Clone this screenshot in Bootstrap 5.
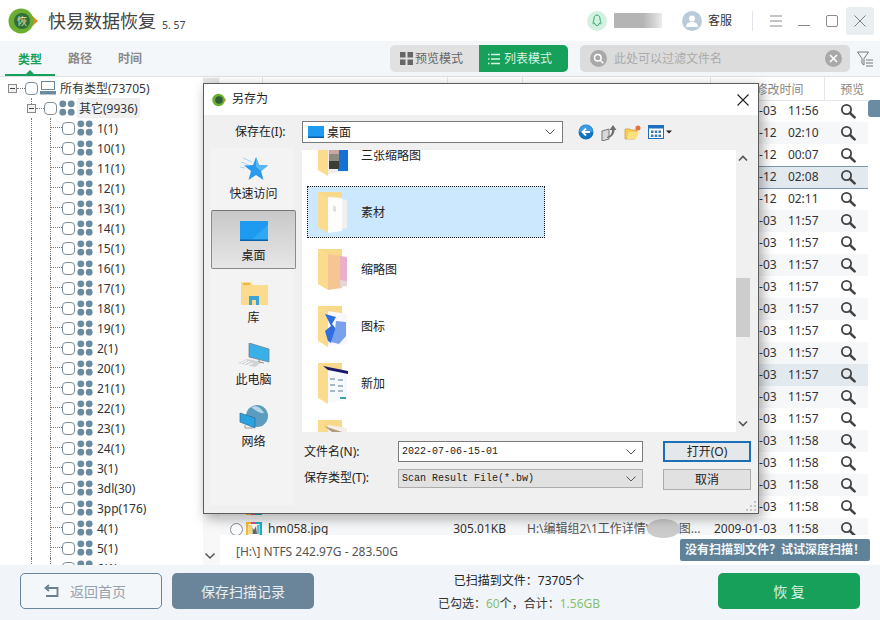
<!DOCTYPE html>
<html lang="zh-CN">
<head>
  <meta charset="UTF-8">
  <meta name="viewport" content="width=device-width, initial-scale=1">
  <title>快易数据恢复</title>
  <link href="https://cdn.jsdelivr.net/npm/bootstrap@5.3.3/dist/css/bootstrap.min.css" rel="stylesheet">
  <style>
    html, body { margin: 0; height: 620px; overflow: hidden; background: #fff; }
    body { font-family: "Noto Sans", "Noto Sans CJK SC", sans-serif; font-size: 12px; color: #333; line-height: 16px; }
    .app { width: 880px; height: 620px; }

    /* top bar */
    .top-bar { height: 41px; flex: none; padding-left: 8px; }
    .app-title { font-size: 18px; margin-left: 10px; color: #444; }
    .app-ver { font-size: 10.5px; margin: 9px 0 0 6px; color: #444; }
    .qq-dot { width: 20px; height: 20px; border-radius: 50%; background: #d3f1e1; }
    .name-blur { width: 48px; height: 15px; margin: 0 20px 0 7px; background: linear-gradient(to right, #b4b4b4 60%, #d4d4d4 85%, #eee); }
    .me-dot { width: 20px; height: 20px; border-radius: 50%; background: #b9cbdb; margin-right: 6px; }
    .bar-sep { width: 1px; height: 20px; background: #e2e6ea; margin: 0 17px 0 20px; }
    .win-gap { margin-right: 16px; }
    .win-close { width: 28px; height: 28px; background: #e9eef0; border-radius: 3px; margin: 0 6px 0 8px; }

    /* toolbar */
    .tool-bar { height: 36px; flex: none; background: #f4f7fa; border-bottom: 1px solid #dfe3e6; padding-left: 5px; padding-right: 7px; }
    .tab-item { width: 50px; line-height: 36px; text-align: center; color: #8a8a8a; font-weight: 700; position: relative; }
    .tab-item.on { color: #17a05a; border-bottom: 2px solid #17a05a; line-height: 38px; height: 35px; }
    .tab-item.on::after { content: ""; position: absolute; left: 21px; bottom: 0; border: 4px solid transparent; border-bottom-color: #17a05a; border-top: 0; }
    .mode-group { height: 27px; margin-top: 4px; border-radius: 5px; overflow: hidden; background: #e1e1e1; width: 178px; }
    .mode-btn { width: 89px; display: flex; align-items: center; padding-left: 10px; gap: 2px; color: #666; font-size: 12px; }
    .mode-btn span { padding-top: 1px; }
    .mode-btn.on { background: #17a05a; color: #d8f3e4; padding-left: 9px; gap: 4px; }
    .filter-box { width: 270px; height: 27px; margin: 4px 7px 0 12px; background: #dcdcdc; border-radius: 5px; padding: 0 8px 0 10px; color: #ababab; }
    .round-ic { width: 17px; height: 17px; border-radius: 50%; background: #a9a9a9; flex: none; }
    .filter-ph { margin-left: 7px; }
    .funnel { margin-top: 10px; }

    /* tree */
    .main-row { flex: 1; min-height: 0; }
    .tree-pane { width: 203px; flex: none; padding-top: 1px; overflow: hidden; }
    .tree-line { height: 20px; white-space: nowrap; }
    .tree-line > span:last-child { padding-top: 2px; }
    .exp-box { width: 9px; height: 9px; border: 1px solid #8a8a8a; background: #f3f3f3; position: relative; flex: none; }
    .exp-box::after { content: ""; position: absolute; left: 1px; right: 1px; top: 3px; border-top: 1px solid #444; }
    .exp-1 { margin-left: 8px; }
    .exp-2 { margin-left: 27px; }
    .exp-2::before { content: ""; position: absolute; left: 3px; top: -7px; height: 6px; border-left: 1px dotted #777; }
    .dot-h { width: 8px; border-top: 1px dotted #777; flex: none; }
    .tick { width: 13px; height: 13px; border: 1px solid #7e8e9a; border-radius: 4px; background: #fff; flex: none; }
    .guide-a { width: 19px; margin-left: 31px; align-self: stretch; border-left: 1px dotted #777; flex: none; }
    .guide-b { width: 12px; align-self: stretch; border-left: 1px dotted #777; flex: none; }
    .guide-b::after { content: ""; display: block; height: 10px; border-bottom: 1px dotted #777; }
    .tree-ic { margin: 0 4px 0 2px; flex: none; }
    .tree-line > span.tree-hl { background: #f0f0f0; padding: 3px 2px 1px; margin-left: -2px; }
    .tree-bar { width: 17px; flex: none; background: #f8f8f8; }
    .tree-thumb { height: 60px; background: #e6e6e6; margin: 1px 1px 0 0; }

    /* file table */
    .file-pane { min-width: 0; flex: 1; }
    .file-wrap { flex: 1; min-height: 0; overflow: hidden; }
    .file-tbl { --bs-table-bg: transparent; table-layout: fixed; width: 648px; margin: 0; font-size: 12px; color: #333; }
    .file-tbl th { height: 23px; padding: 0 0 2px; font-weight: 400; color: #888; border-bottom: 1px solid #e6e6e6; border-right: 1px solid #e6e6e6; }
    .file-tbl th:last-child { border-right: 0; text-align: center; padding-left: 12px; }
    .file-tbl td { height: 22px; padding: 0; white-space: nowrap; overflow: hidden; vertical-align: middle; }
    .file-tbl tr.odd { background: #f6f7f8; }
    .file-tbl tr.hov { background: #e3eaef; }
    .file-tbl tr.sel { background: #e3eaef; }
    .file-tbl tr.sel td { border-top: 1px solid #7f97a9; border-bottom: 1px solid #7f97a9; }
    .file-tbl tr.sel td:last-child { border-right: 1px solid #7f97a9; }
    .file-tbl th.date-h { padding-left: 45px; }
    .size-td { text-align: right; padding-right: 16px !important; }
    .path-td { padding-left: 5px !important; color: #555; }
    .date-td { padding-left: 4px !important; white-space: pre !important; word-spacing: 2.5px; }
    .view-td { padding-left: 4px !important; }
    .view-td svg { display: block; margin: 0 auto; }
    .circle-tick { width: 13px; height: 13px; border: 1px solid #7e8e9a; border-radius: 50%; background: #fff; flex: none; margin: 0 3px 0 10px; }
    .circle-h { display: block; }
    .file-name { margin-left: 6px; }
    .side-bar { width: 12px; flex: none; }
    .side-thumb { height: 17px; margin-top: 23px; background: #6a8ca3; border-radius: 3px 0 0 3px; }
    .status-line { height: 30px; flex: none; padding: 3px 0 0 16px; color: #555; }
    .hint-tag { position: absolute; right: 10px; top: 539px; width: 190px; height: 22px; line-height: 22px; text-align: center; background: #5f8298; color: #f2f6f9; font-weight: 700; border-radius: 2px; white-space: nowrap; }
    .smudge { position: absolute; left: 647px; top: 519px; width: 33px; height: 19px; background: #cbcbcb; border-radius: 50%; }

    /* bottom bar */
    .foot-bar { height: 55px; flex: none; background: #f1f5fa; padding: 8px 20px 0; }
    .foot-btn { width: 142px; height: 36px; font-size: 14px; border-radius: 5px; padding: 0; }
    .back-btn { border: 1px solid #6a8599; color: #94a2ad; background: #f4f7fa; display: flex; align-items: center; padding-left: 23px; gap: 11px; }
    .save-btn { background: #6a8599; border: 0; color: #e8eef2; margin-left: 10px; }
    .ok-btn { background: #17a05a; border: 0; color: #d8f3e4; margin-left: auto; }
    .foot-info { width: 404px; text-align: center; line-height: 23px; padding-left: 6px; margin-top: -4px; }
    .foot-info b { font-weight: 400; color: #86bf6e; }
    .foot-info div:first-child { color: #222; }

    /* save dialog */
    .save-dlg { position: absolute; left: 203px; top: 83px; width: 556px; height: 431px; background: #f0f0f0; border: 1px solid #5c5c5c; box-shadow: 3px 4px 12px rgba(0,0,0,.35); color: #222; }
    .dlg-title { height: 31px; background: #fff; padding: 0 9px 0 8px; flex: none; }
    .dlg-title span { margin-left: 6px; margin-bottom: 2px; }
    .dlg-x { margin-left: auto; }
    .dlg-tools { height: 34px; flex: none; padding-left: 31px; }
    .look-label { width: 67px; }
    .look-combo { width: 261px; height: 22px; background: #fff; border: 1px solid #7a7a7a; padding: 0 7px 0 5px; }
    .look-combo span { margin: 2px 0 0 3px; }
    .tool-ics { margin-left: 15px; gap: 7px; }
    .dlg-body { flex: 1; min-height: 0; }
    .place-col { width: 98px; flex: none; padding: 0 8px 8px 6px; margin-top: -1px; }
    .place-bg { background: #f3f3f3; height: 100%; }
    .place-item { height: 62px; padding-top: 9px; width: 85px; margin-left: 1px; text-align: center; }
    .place-item svg { display: block; margin: 0 auto 5px; }
    .place-item.on { height: 59px; margin-bottom: 3px; background: linear-gradient(#c9c9c9, #e6e6e6); border: 1px solid #8a8a8a; border-top-color: #777; padding-top: 8px; border-radius: 2px; }
    .list-row { height: 282px; flex: none; margin-top: 1px; }
    .list-area { width: 434px; background: #fff; overflow: hidden; }
    .list-scroll { width: 14px; flex: none; }
    .scroll-arrow { height: 17px; }
    .scroll-thumb { height: 59px; margin-top: 111px; background: #cdcdcd; }
    .folder-item { height: 52px; width: 238px; margin: 0 0 5px 5px; padding: 2px 0 0 10px; gap: 13px; border: 1px dotted transparent; }
    .folder-item.first { margin-top: -21px; }
    .folder-item.on { background: #cce8ff; border-color: #1a1a1a; }
    .form-row { margin: 0 0 0 2px; }
    .form-row label { width: 94px; }
    .form-one { padding-top: 9px; height: 37px; }
    .form-one label { padding-top: 3px; }
    .form-two { height: 20px; }
    .form-two label { padding-top: 1px; }
    .name-input { width: 245px; height: 21px; background: #fff; border: 1px solid #7a7a7a; padding: 0 6px 0 3px; font-family: "Liberation Mono", monospace; font-size: 10px; }
    .type-input { width: 245px; height: 19px; background: #e1e1e1; border: 1px solid #adadad; padding: 0 6px 0 3px; font-family: "Liberation Mono", monospace; font-size: 10px; }
    .dlg-btn { width: 88px; height: 21px; margin-left: 20px; padding: 0; background: #e1e1e1; border: 1px solid #adadad; border-radius: 0; font-size: 12px; color: #222; line-height: 16px; }
    .dlg-btn.def { border: 2px solid #1a6fb5; background: #e4e8ea; }
    .grip { position: absolute; right: 2px; bottom: 2px; }
  </style>
</head>

<body>
<svg width="0" height="0" class="d-none">
  <symbol id="dots-ic" viewBox="0 0 16 16"><circle cx="3.8" cy="3.8" r="3.4" fill="#6a8aa0"/><circle cx="12.2" cy="3.8" r="3.4" fill="#6a8aa0"/><circle cx="3.8" cy="12.2" r="3.4" fill="#6a8aa0"/><circle cx="12.2" cy="12.2" r="3.4" fill="#6a8aa0"/></symbol>
  <symbol id="lens-ic" viewBox="0 0 16 16"><circle cx="6.5" cy="6.5" r="4.6" fill="none" stroke="#444" stroke-width="1.8"/><path d="M10 10l4.6 4.4" stroke="#444" stroke-width="2.6" stroke-linecap="round"/></symbol>
  <symbol id="folder-base" viewBox="0 0 30 44"><path d="M0 1h24v8H0z" fill="#f8d98b"/><path d="M0 1l10 6v35L0 36z" fill="#fbdc8e"/></symbol>
</svg>

<div class="app d-flex flex-column position-relative">

  <div class="top-bar d-flex align-items-center">
    <svg width="30" height="26" viewBox="0 0 30 26">
      <path d="M19 3l11 10-11 10z" fill="#e08a2e"/>
      <circle cx="13" cy="13" r="12.5" fill="#6cae2f"/>
      <circle cx="14" cy="13" r="8" fill="#2f6f3a"/>
      <text x="14" y="17" font-size="10" fill="#e8e2b0" text-anchor="middle" font-family="Noto Sans CJK SC">恢</text>
    </svg>
    <div class="app-title">快易数据恢复</div>
    <div class="app-ver">5. 57</div>
    <div class="ms-auto d-flex align-items-center">
      <div class="qq-dot d-flex align-items-center justify-content-center">
        <svg width="10" height="13" viewBox="0 0 10 13"><path d="M5 1C2.8 1 2 3 2 5c0 1.500-1.200 3-1 4.500.5.500 1 0 1.500-.5.500 1.500 1 2.500 2.500 2.500S7 10.500 7.500 9c.5.500 1 1 1.500.5.200-1.500-1-3-1-4.500C8 3 7.200 1 5 1z" fill="none" stroke="#2fa56b" stroke-width="1"/></svg>
      </div>
      <div class="name-blur"></div>
      <div class="me-dot d-flex align-items-center justify-content-center">
        <svg width="14" height="12" viewBox="0 0 14 12"><circle cx="7" cy="3.500" r="3" fill="#fff"/><path d="M1 12c0-3.500 2.500-5 6-5s6 1.500 6 5z" fill="#fff"/></svg>
      </div>
      <span>客服</span>
      <div class="bar-sep"></div>
      <svg class="win-gap" width="12" height="12" viewBox="0 0 12 12"><path d="M0 1h12M0 6h12M0 11h12" stroke="#8a8a8a"/></svg>
      <svg class="win-gap" width="12" height="12" viewBox="0 0 12 12"><path d="M0 10.500h12" stroke="#8a8a8a"/></svg>
      <svg width="12" height="12" viewBox="0 0 12 12"><rect x=".5" y=".5" width="11" height="11" rx="1.500" fill="none" stroke="#8a8a8a"/></svg>
      <div class="win-close d-flex align-items-center justify-content-center">
        <svg width="12" height="12" viewBox="0 0 12 12"><path d="M.5.500l11 11M11.500.500l-11 11" stroke="#7d7d7d"/></svg>
      </div>
    </div>
  </div>

  <div class="tool-bar d-flex">
    <div class="tab-item on">类型</div>
    <div class="tab-item">路径</div>
    <div class="tab-item">时间</div>
    <div class="ms-auto d-flex">
      <div class="mode-group d-flex">
        <div class="mode-btn">
          <svg width="13" height="13" viewBox="0 0 13 13"><path d="M0 0h5.500v5.500H0zM7.500 0H13v5.500H7.500zM0 7.500h5.500V13H0zM7.500 7.500H13V13H7.500z" fill="#666"/></svg>
          <span>预览模式</span>
        </div>
        <div class="mode-btn on">
          <svg width="12" height="12" viewBox="0 0 12 12"><path d="M3 1.500h9M3 6h9M3 10.500h9" stroke="#d8f3e4" stroke-width="1.400"/><path d="M0 .700h1.500v1.500H0zM0 5.200h1.500v1.500H0zM0 9.700h1.500v1.500H0z" fill="#d8f3e4"/></svg>
          <span>列表模式</span>
        </div>
      </div>
      <div class="filter-box d-flex align-items-center">
        <div class="round-ic d-flex align-items-center justify-content-center">
          <svg width="11" height="11" viewBox="0 0 11 11"><circle cx="4.800" cy="4.800" r="3.300" fill="none" stroke="#fff" stroke-width="1.500"/><path d="M7.300 7.300l3 3" stroke="#fff" stroke-width="1.500"/></svg>
        </div>
        <span class="filter-ph">此处可以过滤文件名</span>
        <div class="round-ic ms-auto d-flex align-items-center justify-content-center">
          <svg width="9" height="9" viewBox="0 0 9 9"><path d="M1 1l7 7M8 1l-7 7" stroke="#fff" stroke-width="1.500"/></svg>
        </div>
      </div>
      <svg class="funnel" width="16" height="16" viewBox="0 0 16 16"><path d="M.5 1h11L7 7.500V14L5 12.500v-5z" fill="none" stroke="#777"/><path d="M9 9h7M9 12h7M9 15h7" stroke="#777"/></svg>
    </div>
  </div>

  <div class="main-row d-flex">
    <div class="tree-pane" id="treePane"></div>
    <div class="tree-bar d-flex flex-column">
      <div class="tree-thumb"></div>
      <svg class="mt-auto mb-1" width="14" height="10" viewBox="0 0 14 10"><path d="M2.500 2.500l4.500 4.500 4.500-4.500" fill="none" stroke="#555" stroke-width="1.500"/></svg>
    </div>
    <div class="file-pane d-flex flex-column">
      <div class="d-flex file-wrap">
        <div class="file-wrap">
          <table class="table table-borderless file-tbl">
            <colgroup><col width="42"><col width="185"><col width="75"><col width="188"><col width="114"><col width="44"></colgroup>
            <thead>
              <tr><th><span class="circle-tick circle-h"></span></th><th></th><th></th><th></th><th class="date-h">修改时间</th><th>预览</th></tr>
            </thead>
            <tbody id="fileBody"></tbody>
          </table>
        </div>
        <div class="side-bar"><div class="side-thumb"></div></div>
      </div>
      <div class="status-line d-flex align-items-center">[H:\] NTFS 242.97G - 283.50G</div>
    </div>
  </div>

  <div class="foot-bar d-flex">
    <button class="btn foot-btn back-btn">
      <svg width="15" height="14" viewBox="0 0 15 14"><path d="M5 1L1.500 4 5 7" fill="none" stroke="#6a7f8f" stroke-width="1.800"/><path d="M2 4h11.500v8H2" fill="none" stroke="#6a7f8f" stroke-width="1.800"/></svg>
      <span>返回首页</span>
    </button>
    <button class="btn foot-btn save-btn">保存扫描记录</button>
    <div class="foot-info">
      <div>已扫描到文件：73705个</div>
      <div>已勾选：<b>60</b>个，合计：<b>1.56GB</b></div>
    </div>
    <button class="btn foot-btn ok-btn">恢 复</button>
  </div>

  <div class="smudge"></div>
  <div class="hint-tag">没有扫描到文件？试试深度扫描！</div>

  <div class="save-dlg d-flex flex-column">
    <div class="dlg-title d-flex align-items-center">
      <svg width="14" height="14" viewBox="0 0 14 14"><path d="M10 2l4 5-4 5z" fill="#d98a30"/><circle cx="6.500" cy="7" r="6.200" fill="#6cae2f"/><circle cx="7" cy="7" r="3.800" fill="#2f5f3a"/></svg>
      <span>另存为</span>
      <svg class="dlg-x" width="12" height="12" viewBox="0 0 12 12"><path d="M.5.500l11 11M11.500.500l-11 11" stroke="#222" stroke-width="1.100"/></svg>
    </div>
    <div class="dlg-tools d-flex align-items-center">
      <div class="look-label">保存在(I):</div>
      <div class="look-combo d-flex align-items-center">
        <svg width="16" height="12" viewBox="0 0 16 12"><rect width="16" height="12" fill="#1e9bf0"/><rect y="10.500" width="16" height="1.500" fill="#0b5fa8"/></svg>
        <span>桌面</span>
        <svg class="ms-auto" width="10" height="6" viewBox="0 0 10 6"><path d="M.5.500L5 5 9.500.500" fill="none" stroke="#555"/></svg>
      </div>
      <div class="tool-ics d-flex align-items-center">
        <svg width="16" height="16" viewBox="0 0 16 16"><circle cx="8" cy="8" r="7.500" fill="#1273bd"/><path d="M1 8a7 7 0 0 1 14 0z" fill="#3f9be0"/><path d="M12 8H5M8 4.500L4.500 8 8 11.500" fill="none" stroke="#fff" stroke-width="1.800"/></svg>
        <svg width="16" height="17" viewBox="0 0 16 17"><path d="M1 7l7-2v10l-7 2z" fill="#d8d8d8" stroke="#777"/><path d="M6 13c3-1 5-3 5-7H8.500L12 1l3.500 5H13.500c0 4-3 8-7.500 8z" fill="#6e6e6e"/></svg>
        <svg width="17" height="15" viewBox="0 0 17 15"><path d="M1 4h5l1 1h6l-2 9H1z" fill="#f5cd58" stroke="#c99a2e" stroke-width=".7"/><path d="M3 14l2-7h10l-3 7z" fill="#fbe07e"/><circle cx="14" cy="3" r="2.500" fill="#e8703a"/></svg>
        <svg width="24" height="14" viewBox="0 0 24 14"><rect x=".5" y=".5" width="15" height="13" fill="#fff" stroke="#1e6fc0"/><rect x="1" y="1" width="14" height="2.500" fill="#1e6fc0"/><path d="M3 5.500h2.500V8H3zM6.800 5.500h2.500V8H6.800zM10.500 5.500H13V8h-2.500zM3 9.500h2.500V12H3zM6.800 9.500h2.500V12H6.800zM10.500 9.500H13V12h-2.500z" fill="#3a7ab0"/><path d="M18 5.500h6l-3 3z" fill="#222"/></svg>
      </div>
    </div>
    <div class="dlg-body d-flex">
      <div class="place-col">
        <div class="place-bg">
          <div class="place-item">
            <svg width="28" height="24" viewBox="0 0 28 24"><path d="M16 0l3 8 9 .5-7 5.500 2.500 9L16 18l-7.500 5L11 14 4 8.500l9-.5z" fill="#2a9bee"/><path d="M16 0l3 8 9 .5-7 5.500L16 10z" fill="#5cb8f5"/><path d="M3 1l9 4M1 5l8 3M0 10l5 1" stroke="#a9d6f5"/></svg>
            快速访问
          </div>
          <div class="place-item on">
            <svg width="28" height="24" viewBox="0 0 28 24"><rect y="2" width="28" height="20" fill="#1e9bf0"/><path d="M10 22L28 6v16z" fill="#2fa8f5"/><rect y="20.500" width="28" height="1.500" fill="#0b5fa8"/></svg>
            桌面
          </div>
          <div class="place-item">
            <svg width="28" height="24" viewBox="0 0 28 24"><path d="M1 1h10l2 3h15v20H1z" fill="#fbdc8e"/><path d="M3 2h7v2H3z" fill="#e6b93e"/><path d="M9 24v-9h10v9h-3v-5h-4v5z" fill="#3aa4da"/></svg>
            库
          </div>
          <div class="place-item">
            <svg width="32" height="24" viewBox="0 0 32 24"><path d="M11 0l20 6v13L11 14z" fill="#3ab0e8" stroke="#6f8592" stroke-width=".8"/><path d="M0 20l9-4 15 3-7 5z" fill="#cfd3d6"/><path d="M3 20l6-2.500M6 21l6-2.500M9 22.500l6-2.500" stroke="#fff"/><path d="M21 16v3l5 1" stroke="#8a94a0" fill="none"/></svg>
            此电脑
          </div>
          <div class="place-item">
            <svg width="30" height="24" viewBox="0 0 30 24"><circle cx="18" cy="11" r="11" fill="#5c9cc0"/><path d="M12 2c6-2 10 1 13 6-4 1-8-2-13-6z" fill="#b7d7e8"/><path d="M1 8l15 5v10L1 17z" fill="#2ba2e0" stroke="#2a6c94" stroke-width=".7"/><path d="M6 20v3h8" stroke="#99a" fill="none"/></svg>
            网络
          </div>
        </div>
      </div>
      <div class="flex-grow-1 d-flex flex-column">
        <div class="list-row d-flex">
          <div class="list-area">
            <div class="folder-item first d-flex align-items-center">
              <svg width="30" height="44" viewBox="0 0 30 44"><use href="#folder-base"/><path d="M10 6l20 1v30l-20 3z" fill="#f2eee8"/><path d="M20 7h10v30H20z" fill="#1372d4"/><path d="M11 14h10v6H11z" fill="#c9a6a0"/><path d="M11 20h10v7H11z" fill="#8d8a7e"/><path d="M11 27h10v8H11z" fill="#3d3d38"/></svg>
              <span>三张缩略图</span>
            </div>
            <div class="folder-item on d-flex align-items-center">
              <svg width="30" height="44" viewBox="0 0 30 44"><use href="#folder-base"/><path d="M10 6l14 1v33l-14 2z" fill="#fdfdfd"/><path d="M24 8l5 1v28l-5 1z" fill="#f1f1f1"/><path d="M15 14l3 2v5l-3-1z" fill="#e5e0d2"/></svg>
              <span>素材</span>
            </div>
            <div class="folder-item d-flex align-items-center">
              <svg width="30" height="44" viewBox="0 0 30 44"><use href="#folder-base"/><path d="M10 6l14 2v32l-14 2z" fill="#f5c592"/><path d="M22 8l7 1v24l-7 6z" fill="#e9afcb"/><path d="M22 32l7 1v5l-7 1z" fill="#e6d6da"/></svg>
              <span>缩略图</span>
            </div>
            <div class="folder-item d-flex align-items-center">
              <svg width="30" height="44" viewBox="0 0 30 44"><use href="#folder-base"/><path d="M10 6l19 3v30l-19 2z" fill="#f8f8fb"/><path d="M7 9l11 3-4 7 4 5-5 14-3-2-3-10 6-5z" fill="#2f6ee0"/><path d="M18 16l10 1v14l-7 8-8-2 4-12z" fill="#7aa2ec"/></svg>
              <span>图标</span>
            </div>
            <div class="folder-item d-flex align-items-center">
              <svg width="30" height="44" viewBox="0 0 30 44"><use href="#folder-base"/><path d="M10 6l19 3v29l-19 3z" fill="#f7fafc"/><path d="M5 4l25 5v3L10 8z" fill="#1d1a6b"/><path d="M12 17h5M20 18h5M12 23h5M20 24h5M12 29h5M20 29h5" stroke="#8aa3b8" stroke-width="1.600"/><path d="M22 36h6" stroke="#3b9fb5" stroke-width="2"/></svg>
              <span>新加</span>
            </div>
            <div class="folder-item d-flex align-items-center">
              <svg width="30" height="44" viewBox="0 0 30 44"><use href="#folder-base"/><path d="M10 6l19 3v29l-19 3z" fill="#f4efe8"/><path d="M6 7l18 6-6 3z" fill="#b59a80"/></svg>
            </div>
          </div>
          <div class="list-scroll d-flex flex-column">
            <div class="scroll-arrow d-flex align-items-center justify-content-center">
              <svg width="10" height="7" viewBox="0 0 10 7"><path d="M1 5.500L5 1.500l4 4" fill="none" stroke="#555" stroke-width="1.600"/></svg>
            </div>
            <div class="scroll-thumb"></div>
            <div class="scroll-arrow mt-auto d-flex align-items-center justify-content-center">
              <svg width="10" height="7" viewBox="0 0 10 7"><path d="M1 1.500L5 5.500l4-4" fill="none" stroke="#555" stroke-width="1.600"/></svg>
            </div>
          </div>
        </div>
        <div class="form-row form-one d-flex">
          <label>文件名(N):</label>
          <div class="name-input d-flex align-items-center"><span>2022-07-06-15-01</span>
            <svg class="ms-auto" width="10" height="6" viewBox="0 0 10 6"><path d="M.5.500L5 5 9.500.500" fill="none" stroke="#555"/></svg>
          </div>
          <button class="btn dlg-btn def">打开(O)</button>
        </div>
        <div class="form-row form-two d-flex">
          <label>保存类型(T):</label>
          <div class="type-input d-flex align-items-center"><span>Scan Result File(*.bw)</span>
            <svg class="ms-auto" width="10" height="6" viewBox="0 0 10 6"><path d="M.5.500L5 5 9.500.500" fill="none" stroke="#555"/></svg>
          </div>
          <button class="btn dlg-btn">取消</button>
        </div>
      </div>
    </div>
    <svg class="grip" width="10" height="10" viewBox="0 0 10 10"><path d="M8 0h2v2H8zM4 4h2v2H4zM8 4h2v2H8zM0 8h2v2H0zM4 8h2v2H4zM8 8h2v2H8z" fill="#c4c4c4"/></svg>
  </div>
</div>

<script>
document.addEventListener('DOMContentLoaded', function () {
  const dots = '<svg class="tree-ic" width="16" height="16"><use href="#dots-ic"/></svg>';

  // tree on the left
  const leaves = ['1(1)','10(1)','11(1)','12(1)','13(1)','14(1)','15(1)','16(1)','17(1)','18(1)','19(1)',
    '2(1)','20(1)','21(1)','22(1)','23(1)','24(1)','3(1)','3dl(30)','3pp(176)','4(1)','5(1)','6(1)'];
  let tree =
    '<div class="tree-line d-flex align-items-center"><span class="exp-box exp-1"></span><span class="dot-h"></span><span class="tick"></span>' +
    '<svg class="tree-ic" width="16" height="14" viewBox="0 0 16 14"><rect x="1.500" y=".5" width="13" height="8" fill="none" stroke="#6a8aa0"/><path d="M0 10h16v3.500H0z" fill="#6a8aa0"/></svg><span>所有类型(73705)</span></div>' +
    '<div class="tree-line d-flex align-items-center"><span class="exp-box exp-2"></span><span class="dot-h"></span><span class="tick"></span>' + dots + '<span class="tree-hl">其它(9936)</span></div>';
  leaves.forEach(name => {
    tree += '<div class="tree-line d-flex align-items-center"><span class="guide-a"></span><span class="guide-b"></span><span class="tick"></span>' + dots + '<span>' + name + '</span></div>';
  });
  document.getElementById('treePane').innerHTML = tree;

  // file rows, the dialog covers everything but the date end and the last row
  const times = [
    ['2009-01-03','11:56'],['2010-10-12','02:10'],['2010-10-12','00:07'],['2010-10-12','02:08'],['2010-10-12','02:11'],
    ['2009-01-03','11:57'],['2009-01-03','11:57'],['2009-01-03','11:57'],['2009-01-03','11:57'],['2009-01-03','11:57'],
    ['2009-01-03','11:57'],['2009-01-03','11:57'],['2009-01-03','11:57'],['2009-01-03','11:57'],['2009-01-03','11:57'],
    ['2009-01-03','11:58'],['2009-01-03','11:58'],['2009-01-03','11:58'],['2009-01-03','11:58'],['2009-01-03','11:58']
  ];
  const fileBody = document.getElementById('fileBody');
  times.forEach((t, i) => {
    const tr = document.createElement('tr');
    if (i % 2 === 1) tr.classList.add('odd');
    if (i === 3) tr.classList.add('sel');
    if (i === 12) tr.classList.add('hov');
    const last = i === times.length - 1;
    tr.innerHTML =
      '<td colspan="2"><div class="d-flex align-items-center"><span class="circle-tick"></span>' +
      '<svg width="16" height="15" viewBox="0 0 16 15"><rect width="16" height="15" fill="#fff"/><path d="M0 0h5v15H0z" fill="#f5b93c"/><path d="M5 0h5v3H5zM5 12h5v3H5z" fill="#e0508a"/><path d="M10 0h6v15h-6z" fill="#1cb0c0"/><path d="M2.500 2h11v11h-11z" fill="#fff"/><path d="M3 3h3v9H3z" fill="#f9dc5a"/><path d="M6.500 5l1.500 3 2-4 1 8H6.500z" fill="#666"/><path d="M11 3h2v9h-2z" fill="#5cc4d4"/></svg>' +
      '<span class="file-name">' + (last ? 'hm058.jpg' : i === 18 ? 'hm057.jpg' : '') + '</span></div></td>' +
      '<td class="size-td">' + (last ? '305.01KB' : '') + '</td>' +
      '<td class="path-td">' + (last ? 'H:\\编辑组2\\1工作详情\\素材\\图...' : '') + '</td>' +
      '<td class="date-td">' + t[0] + '  ' + t[1] + '</td>' +
      '<td class="view-td"><svg width="16" height="16"><use href="#lens-ic"/></svg></td>';
    fileBody.appendChild(tr);
  });
});
</script>
<script src="https://cdn.jsdelivr.net/npm/bootstrap@5.3.3/dist/js/bootstrap.bundle.min.js"></script>
</body>
</html>
